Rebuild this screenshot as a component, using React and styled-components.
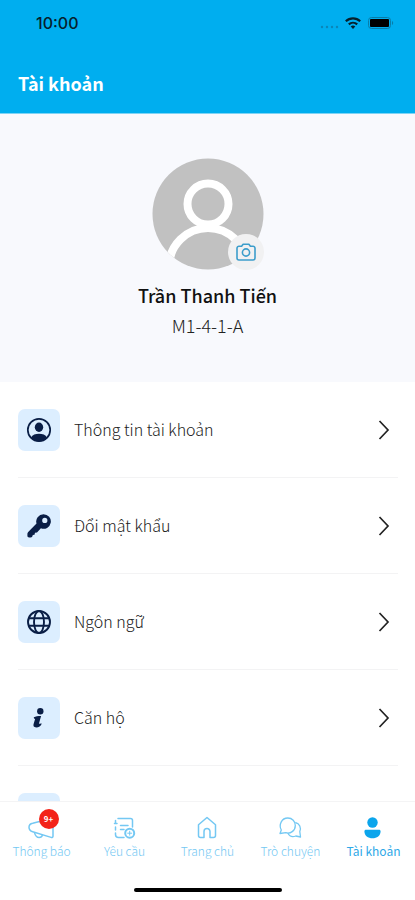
import styled, { createGlobalStyle } from "styled-components";

const GlobalStyle = createGlobalStyle`
    * {
        box-sizing: border-box;
    }

    body {
        margin: 0;
        background-color: #fff;
        font-family: "Noto Sans CJK JP", "Noto Sans", sans-serif;
    }

    button {
        font-family: inherit;
    }
`;

const Screen = styled.div`
    height: 100vh;
    display: flex;
    flex-direction: column;
    background-color: #fff;
`;

const Header = styled.header`
    flex-shrink: 0;
    background-color: #00aeef;
    border-bottom: 1px solid #7fd4f5;
`;

const StatusBar = styled.div`
    height: 46px;
    padding: 0 20px 0 36px;
    display: flex;
    align-items: center;
    justify-content: space-between;
    color: #06202c;
`;

const Clock = styled.time`
    font-family: Inter, sans-serif;
    font-size: 16px;
    font-weight: 500;
    line-height: 20px;
`;

const Title = styled.h1`
    margin: 0;
    padding: 22px 18px 15px;
    font-size: 18px;
    font-weight: 700;
    line-height: 30px;
    color: #fff;
`;

const Content = styled.main`
    flex: 1;
    min-height: 0;
    overflow-y: auto;
    scrollbar-width: none;
`;

const Profile = styled.section`
    padding: 44px 18px 42px;
    display: flex;
    flex-direction: column;
    align-items: center;
    background-color: #f8f9fd;
`;

const AvatarBox = styled.div`
    position: relative;
    display: flex;
    margin-bottom: 10px;
`;

const CameraButton = styled.button`
    position: absolute;
    right: 0;
    bottom: 0;
    width: 36px;
    height: 36px;
    padding: 0;
    display: flex;
    align-items: center;
    justify-content: center;
    border: 0;
    border-radius: 50%;
    background-color: #f1f1f2;
    color: #3c9dcb;
    cursor: pointer;
`;

const Name = styled.h2`
    margin: 0;
    font-size: 18px;
    font-weight: 500;
    line-height: 30px;
    color: #111;
`;

const Unit = styled.p`
    margin: 0;
    font-size: 18px;
    font-weight: 300;
    line-height: 30px;
    color: #222;
`;

const Menu = styled.ul`
    margin: 0;
    padding: 0 17px 0 18px;
    list-style: none;
`;

const MenuItem = styled.li`
    border-bottom: 1px solid #f3f3f4;
`;

const MenuButton = styled.button`
    width: 100%;
    height: 95px;
    padding: 0 8px 0 0;
    display: flex;
    align-items: center;
    gap: 14px;
    border: 0;
    background: none;
    font-size: 16px;
    font-weight: 300;
    line-height: 24px;
    color: #222;
    text-align: left;
    cursor: pointer;
`;

const IconTile = styled.span`
    width: 42px;
    height: 42px;
    display: flex;
    align-items: center;
    justify-content: center;
    border-radius: 7px;
    background-color: #dceeff;
    color: #0a1e46;
`;

const MenuLabel = styled.span`
    flex: 1;
    padding-bottom: 2px;
`;

const BottomBar = styled.footer`
    flex-shrink: 0;
    border-top: 1px solid #f4f4f5;
    background-color: #fff;
`;

const Tabs = styled.nav`
    display: grid;
    grid-template-columns: repeat(5, 1fr);
    padding-top: 13px;
`;

const Tab = styled.a`
    display: flex;
    flex-direction: column;
    align-items: center;
    font-size: 12px;
    font-weight: ${({ $active }) => ($active ? 400 : 300)};
    line-height: 20px;
    white-space: nowrap;
    text-decoration: none;
    color: ${({ $active }) => ($active ? "#2fa9e8" : "#74c8f3")};
`;

const TabIcon = styled.span`
    position: relative;
    display: flex;
    height: 26px;
`;

const Badge = styled.span`
    position: absolute;
    top: -6px;
    right: -3px;
    width: 20px;
    height: 20px;
    border-radius: 50%;
    background-color: #f32319;
    color: #fff;
    font-size: 8px;
    font-weight: 700;
    line-height: 20px;
    text-align: center;
`;

const HomeIndicator = styled.div`
    width: 148px;
    height: 4px;
    margin: 27px auto 8px;
    border-radius: 2px;
    background-color: #000;
`;

const StatusIcons = () => (
    <svg width="75" height="16" viewBox="0 0 75 16" fill="none">
        <g fill="#0b86b8">
            <circle cx="2" cy="12" r="1.2" />
            <circle cx="7" cy="12" r="1.2" />
            <circle cx="12" cy="12" r="1.2" />
            <circle cx="17" cy="12" r="1.2" />
        </g>
        <g stroke="#06202c" strokeWidth="2.2">
            <path d="M25.8 6.2a10.5 10.5 0 0 1 14.4 0" />
            <path d="M28.8 9.4a6.2 6.2 0 0 1 8.4 0" />
        </g>
        <path d="M33 14l-2.3-2.5a3.3 3.3 0 0 1 4.6 0z" fill="#06202c" />
        <rect x="48.5" y="2.5" width="22" height="11" rx="3" stroke="#087da9" />
        <rect x="50" y="4" width="19" height="8" rx="1" fill="#000" />
        <path d="M72 6c1.6.5 1.6 3.5 0 4z" fill="#087da9" />
    </svg>
);

const Avatar = () => (
    <svg width="112" height="112" viewBox="0 0 112 112" fill="none">
        <clipPath id="avatar">
            <circle cx="56" cy="56" r="55.5" />
        </clipPath>
        <g clipPath="url(#avatar)">
            <rect width="112" height="112" fill="#c1c1c1" />
            <circle cx="56" cy="109" r="39" stroke="#fff" strokeWidth="8" />
            <circle cx="56" cy="46" r="20.5" fill="#c1c1c1" stroke="#fff" strokeWidth="8" />
        </g>
    </svg>
);

const CameraIcon = () => (
    <svg width="20" height="18" viewBox="0 0 20 18" fill="none" stroke="currentColor" strokeWidth="1.6" strokeLinejoin="round">
        <path d="M3 3.2h2.6l1.5-2h5.8l1.5 2H17a2 2 0 0 1 2 2V15a2 2 0 0 1-2 2H3a2 2 0 0 1-2-2V5.2a2 2 0 0 1 2-2z" />
        <circle cx="10" cy="9.5" r="3.6" />
    </svg>
);

const AccountIcon = () => (
    <svg width="26" height="26" viewBox="0 0 26 26" fill="none">
        <circle cx="13" cy="13" r="11.2" stroke="currentColor" strokeWidth="1.7" />
        <ellipse cx="13" cy="10.3" rx="4.2" ry="4.7" fill="currentColor" />
        <path d="M5 20.5c1.5-3 4.5-3.8 8-3.8s6.5.8 8 3.8c-2 2.6-5 3.9-8 3.9s-6-1.3-8-3.9z" fill="currentColor" />
    </svg>
);

const KeyIcon = () => (
    <svg width="26" height="26" viewBox="0 0 26 26" fill="currentColor">
        <path
            fillRule="evenodd"
            d="M17.5 1.2a7.3 7.3 0 0 0-7 9.4L2.200 19.100c-.6.6-.8 1.200-.8 2v1.600c0 1 .7 1.700 1.700 1.700h1.500c.9 0 1.500-.4 1.800-1.200l.4-1.200 1.700-.3.500-1.900 2-.3 3.900-4.200A7.300 7.300 0 1 0 17.500 1.200zM18.800 4.800a2.600 2.600 0 1 1 0 5.200 2.600 2.600 0 0 1 0-5.200z"
        />
    </svg>
);

const GlobeIcon = () => (
    <svg width="26" height="26" viewBox="0 0 26 26" fill="none" stroke="currentColor" strokeWidth="1.9">
        <circle cx="13" cy="13" r="11" />
        <ellipse cx="13" cy="13" rx="5" ry="11" />
        <path d="M2.8 9.3h20.4M2.8 16.7h20.4" />
    </svg>
);

const InfoIcon = () => (
    <svg width="26" height="26" viewBox="0 0 26 26" fill="currentColor">
        <circle cx="14.3" cy="6.2" r="3.2" />
        <path d="M7.8 12.3c1.8-.9 4-1.3 7.3-1.3l-2.2 7.7 2.9-.3c-.9 2.8-3 4-5.6 4-2.4 0-3.2-1.3-2.6-3.3l1.5-5.1c-.8-.1-1.3-.7-1.3-1.7z" />
    </svg>
);

const ChevronIcon = () => (
    <svg width="12" height="20" viewBox="0 0 12 20" fill="none" stroke="#222" strokeWidth="1.7">
        <path d="M1.5 1l8.5 9-8.5 9" />
    </svg>
);

const MegaphoneIcon = () => (
    <svg width="28" height="26" viewBox="0 0 28 26" fill="none" stroke="currentColor" strokeWidth="1.5" strokeLinejoin="round">
        <path d="M25 10v11.2c0 1-.9 1.6-1.9 1.2L4.700 16.800C2.500 16.100 1 14.500 1 12.300s1.600-3.700 3.700-4.100L12.500 6.300l9-5" />
        <path d="M6.500 17.600c.8 3.200 2.400 4.900 4.600 4.900 1.800 0 3-1 3.400-2.500" />
    </svg>
);

const RequestIcon = () => (
    <svg width="26" height="26" viewBox="0 0 26 26" fill="none" stroke="currentColor" strokeWidth="1.5" strokeLinecap="round">
        <path d="M6 3.5h12.5a2 2 0 0 1 2 2V12M3.5 8V5.5M2.5 8.5h2.5M3.5 12v3M3.5 18v1.500a3 3 0 0 0 3 3H12M8.5 10.5H16M8.5 14.5h3.5" />
        <circle cx="17.7" cy="18.2" r="4.5" strokeWidth="2" fill="#fff" />
        <path d="M17.7 16.2v4M15.7 18.2h4" strokeWidth="1" />
    </svg>
);

const HomeIcon = () => (
    <svg width="24" height="26" viewBox="0 0 24 26" fill="none" stroke="currentColor" strokeWidth="1.5" strokeLinejoin="round">
        <path d="M2.5 9.8L11 2.5l8.5 7.3V20.5a2 2 0 0 1-2 2H14v-6a3 3 0 0 0-6 0v6H4.500a2 2 0 0 1-2-2z" />
    </svg>
);

const ChatIcon = () => (
    <svg width="26" height="26" viewBox="0 0 26 26" fill="none" stroke="currentColor" strokeWidth="1.3" strokeLinejoin="round">
        <path d="M3.3 15C.5 10 3.500 3 9.8 3c4.500 0 7.5 3.300 7.5 7.500 0 5.5-5 8.500-9.500 7.200L2 18.500z" />
        <path d="M17.3 7.5c4.500 1 6 5.5 4.500 9l.7 5.500-4.7-1c-3.500 1.300-6.500 0-8-3" />
    </svg>
);

const PersonIcon = () => (
    <svg width="26" height="26" viewBox="0 0 26 26" fill="#0ba5ec">
        <circle cx="11.5" cy="7.5" r="5.200" />
        <path d="M5 14.700h13c1 0 1.600.6 1.600 1.500 0 4.500-3.600 7-8.100 7s-8.100-2.500-8.100-7c0-.9.6-1.500 1.600-1.500z" />
    </svg>
);

const menu = [
    { id: "account", label: "Thông tin tài khoản", icon: <AccountIcon /> },
    { id: "password", label: "Đổi mật khẩu", icon: <KeyIcon /> },
    { id: "language", label: "Ngôn ngữ", icon: <GlobeIcon /> },
    { id: "apartment", label: "Căn hộ", icon: <InfoIcon /> },
    { id: "more" },
];

const tabs = [
    { label: "Thông báo", icon: <MegaphoneIcon />, badge: "9+" },
    { label: "Yêu cầu", icon: <RequestIcon /> },
    { label: "Trang chủ", icon: <HomeIcon /> },
    { label: "Trò chuyện", icon: <ChatIcon /> },
    { label: "Tài khoản", icon: <PersonIcon />, active: true },
];

const App = () => (
    <Screen>
        <GlobalStyle />
        <Header>
            <StatusBar>
                <Clock>10:00</Clock>
                <StatusIcons />
            </StatusBar>
            <Title>Tài khoản</Title>
        </Header>
        <Content>
            <Profile>
                <AvatarBox>
                    <Avatar />
                    <CameraButton type="button">
                        <CameraIcon />
                    </CameraButton>
                </AvatarBox>
                <Name>Trần Thanh Tiến</Name>
                <Unit>M1-4-1-A</Unit>
            </Profile>
            <Menu>
                {menu.map(({ id, label, icon }) => (
                    <MenuItem key={id}>
                        <MenuButton type="button">
                            <IconTile>{icon}</IconTile>
                            <MenuLabel>{label}</MenuLabel>
                            <ChevronIcon />
                        </MenuButton>
                    </MenuItem>
                ))}
            </Menu>
        </Content>
        <BottomBar>
            <Tabs>
                {tabs.map(({ label, icon, badge, active }) => (
                    <Tab key={label} href="#" $active={active}>
                        <TabIcon>
                            {icon}
                            {badge && <Badge>{badge}</Badge>}
                        </TabIcon>
                        {label}
                    </Tab>
                ))}
            </Tabs>
            <HomeIndicator />
        </BottomBar>
    </Screen>
);

export default App;
